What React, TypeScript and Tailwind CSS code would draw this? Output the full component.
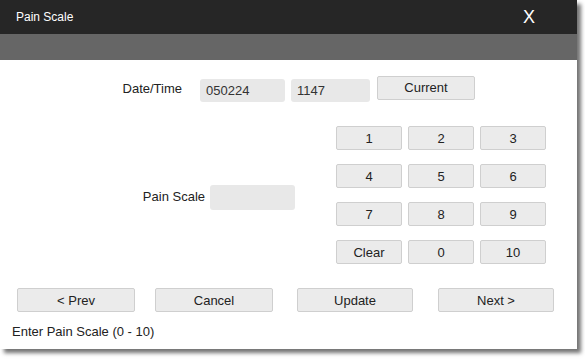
const keys = ['1', '2', '3', '4', '5', '6', '7', '8', '9', 'Clear', '0', '10'];

function Btn({ label, className = '' }: { label: string; className?: string }) {
  return (
    <button
      className={`h-[24px] rounded-[2px] border border-[#cfcfcf] bg-[#ebebeb] text-[13px] text-[#222] leading-none ${className}`}
    >
      {label}
    </button>
  );
}

export default function App() {
  return (
    <div className="h-[360px] w-[585px] bg-white" style={{ fontFamily: '"Liberation Sans", Arial, sans-serif' }}>
      <div className="flex h-[349px] w-[577px] flex-col bg-white shadow-[4px_4px_4px_rgba(0,0,0,0.55)]">
        <div className="flex h-[34px] items-center justify-between bg-[#262626] pl-[16px] pr-[42px] text-white">
          <span className="text-[12px]">Pain Scale</span>
          <span className="text-[18px] leading-none">X</span>
        </div>
        <div className="h-[26px] bg-[#666666]" />

        <div className="mt-[15px] flex items-center">
          <div className="w-[200px] pr-[18px] text-right text-[13px] text-[#222]">Date/Time</div>
          <div className="mt-[4px] flex h-[23px] w-[85px] items-center rounded-[3px] bg-[#e8e8e8] pl-[6px] text-[13px] text-[#333]">
            050224
          </div>
          <div className="ml-[6px] mt-[4px] flex h-[23px] w-[79px] items-center rounded-[3px] bg-[#e8e8e8] pl-[6px] text-[13px] text-[#333]">
            1147
          </div>
          <Btn label="Current" className="ml-[7px] w-[98px] -mt-[2px]" />
        </div>

        <div className="mt-[24px] flex items-center">
          <div className="flex w-[336px] items-center justify-end pr-[41px] pt-[4px]">
            <span className="mr-[5px] text-[13px] text-[#222]">Pain Scale</span>
            <div className="h-[25px] w-[85px] rounded-[3px] bg-[#e8e8e8]" />
          </div>
          <div className="grid grid-cols-[66px_66px_66px] gap-x-[6px] gap-y-[14px]">
            {keys.map((k) => (
              <Btn key={k} label={k} />
            ))}
          </div>
        </div>

        <div className="mt-[24px] flex pl-[17px]">
          <Btn label="< Prev" className="w-[118px]" />
          <Btn label="Cancel" className="ml-[20px] w-[118px]" />
          <Btn label="Update" className="ml-[24px] w-[116px]" />
          <Btn label="Next >" className="ml-[25px] w-[116px]" />
        </div>

        <div className="mt-[10px] pl-[12px] text-[13px] text-[#222]">Enter Pain Scale (0 - 10)</div>
      </div>
    </div>
  );
}
